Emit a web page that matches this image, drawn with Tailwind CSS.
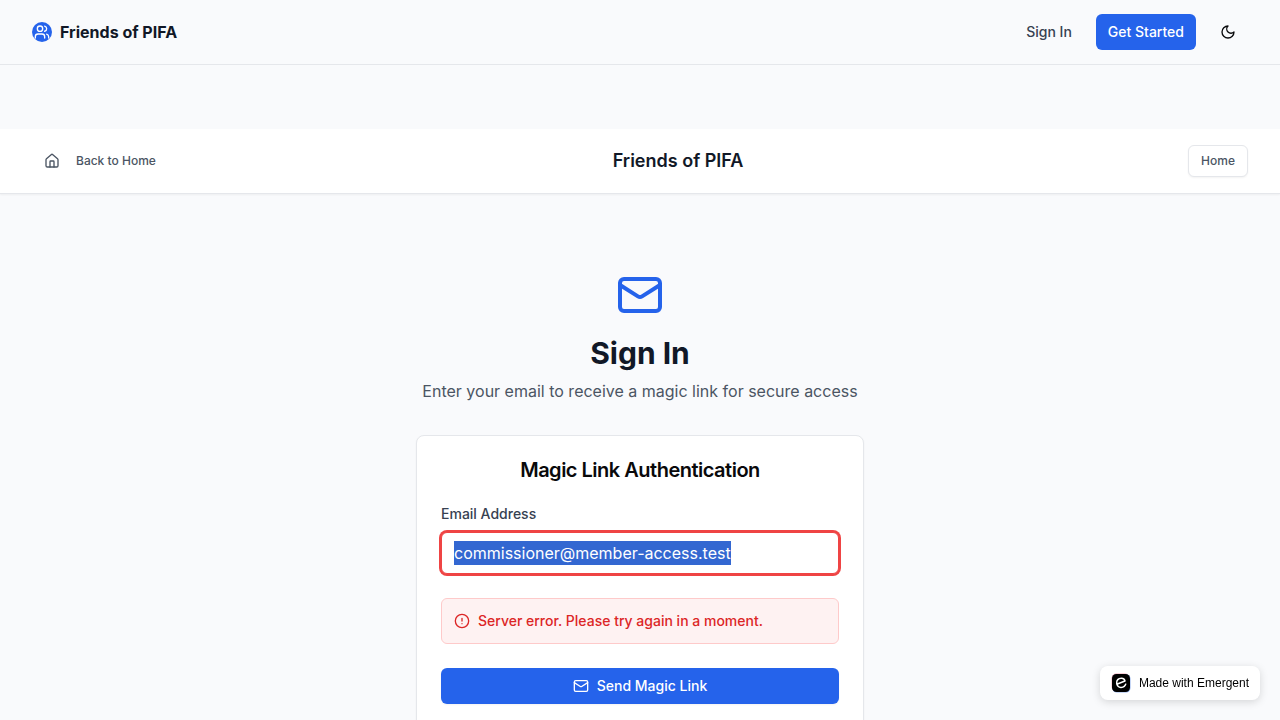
<!DOCTYPE html>
<html lang="en">
<head>
<meta charset="utf-8">
<meta name="viewport" content="width=device-width, initial-scale=1">
<title>Sign In - Friends of PIFA</title>
<script src="https://cdn.jsdelivr.net/npm/@tailwindcss/browser@4"></script>
</head>
<body class="h-screen overflow-hidden bg-[#f9fafc] font-['Inter',sans-serif] text-[#111827] antialiased">
  <header class="flex h-[65px] items-center justify-between border-b border-[#e5e7eb] px-8">
    <a href="#" class="flex items-center gap-2">
      <span class="flex size-5 items-center justify-center rounded-full bg-[#2563eb] text-white">
        <svg class="size-4" viewBox="0 0 24 24" fill="none" stroke="currentColor" stroke-width="2" stroke-linecap="round" stroke-linejoin="round" aria-hidden="true"><path d="M16 21v-2a4 4 0 0 0-4-4H6a4 4 0 0 0-4 4v2"/><circle cx="9" cy="7" r="4"/><path d="M22 21v-2a4 4 0 0 0-3-3.870"/><path d="M16 3.130a4 4 0 0 1 0 7.750"/></svg>
      </span>
      <span class="text-base font-bold">Friends of PIFA</span>
    </a>
    <nav class="flex items-center gap-3">
      <a href="#" class="px-3 text-sm font-medium text-[#374151]">Sign In</a>
      <button type="button" class="h-9 rounded-md bg-[#2563eb] px-3 text-sm font-medium text-white">Get Started</button>
      <button type="button" aria-label="Toggle theme" class="flex h-9 w-10 items-center justify-center text-[#09090b]">
        <svg class="size-4" viewBox="0 0 24 24" fill="none" stroke="currentColor" stroke-width="2" stroke-linecap="round" stroke-linejoin="round" aria-hidden="true"><path d="M12 3a6 6 0 0 0 9 9 9 9 0 1 1-9-9Z"/></svg>
      </button>
    </nav>
  </header>

  <div class="mt-16 flex h-[65px] items-center justify-between border-b border-[#e5e7eb] bg-white px-8 shadow-xs">
    <a href="#" class="flex items-center gap-4 px-3 text-xs font-medium text-[#4b5563]">
      <svg class="size-4" viewBox="0 0 24 24" fill="none" stroke="currentColor" stroke-width="2" stroke-linecap="round" stroke-linejoin="round" aria-hidden="true"><path d="M15 21v-8a1 1 0 0 0-1-1h-4a1 1 0 0 0-1 1v8"/><path d="M3 10a2 2 0 0 1 .709-1.528l7-5.999a2 2 0 0 1 2.582 0l7 5.999A2 2 0 0 1 21 10v9a2 2 0 0 1-2 2H5a2 2 0 0 1-2-2z"/></svg>
      Back to Home
    </a>
    <h2 class="text-lg font-semibold">Friends of PIFA</h2>
    <button type="button" class="h-8 rounded-md border border-[#e5e7eb] bg-white px-3 text-xs font-medium text-[#4b5563] shadow-xs">Home</button>
  </div>

  <main class="mx-auto max-w-md pt-[77px]">
    <div class="mb-8 text-center">
      <svg class="mx-auto mb-4 size-12 text-[#2563eb]" viewBox="0 0 24 24" fill="none" stroke="currentColor" stroke-width="2" stroke-linecap="round" stroke-linejoin="round" aria-hidden="true"><rect width="20" height="16" x="2" y="4" rx="2"/><path d="m22 7-8.970 5.700a1.940 1.940 0 0 1-2.060 0L2 7"/></svg>
      <h1 class="text-3xl font-bold">Sign In</h1>
      <p class="mt-2 text-base text-[#4b5563]">Enter your email to receive a magic link for secure access</p>
    </div>
    <section class="rounded-lg border border-[#e5e7eb] bg-white p-6 shadow-xs">
      <h3 class="text-center text-xl/5 font-semibold tracking-tight text-[#09090b]">Magic Link Authentication</h3>
      <form class="mt-6 flex flex-col gap-6">
        <div class="flex flex-col gap-2">
          <label for="email" class="text-sm font-medium text-[#374151]">Email Address</label>
          <input id="email" type="text" inputmode="email" value="commissioner@member-access.test" spellcheck="false" class="w-full rounded-md border border-[#ef4444] bg-white px-3 py-2 text-base text-[#111827] ring-2 ring-[#ef4444] outline-none selection:bg-[#3367d1] selection:text-white">
        </div>
        <div role="alert" class="flex items-center gap-2 rounded-md border border-[#fecaca] bg-[#fef2f2] p-3 text-sm font-medium text-[#dc2626]">
          <svg class="size-4" viewBox="0 0 24 24" fill="none" stroke="currentColor" stroke-width="2" stroke-linecap="round" stroke-linejoin="round" aria-hidden="true"><circle cx="12" cy="12" r="10"/><path d="M12 8v4M12 16h.01"/></svg>
          <p>Server error. Please try again in a moment.</p>
        </div>
        <button type="submit" class="flex h-9 items-center justify-center gap-2 rounded-md bg-[#2563eb] text-sm font-medium text-white shadow-xs">
          <svg class="size-4" viewBox="0 0 24 24" fill="none" stroke="currentColor" stroke-width="2" stroke-linecap="round" stroke-linejoin="round" aria-hidden="true"><rect width="20" height="16" x="2" y="4" rx="2"/><path d="m22 7-8.970 5.700a1.940 1.940 0 0 1-2.060 0L2 7"/></svg>
          Send Magic Link
        </button>
      </form>
    </section>
  </main>

  <a href="#" class="fixed right-5 bottom-5 flex items-center gap-2 rounded-lg bg-white px-[11px] py-[7px] font-['Liberation_Sans',sans-serif] text-xs text-black shadow-[0_2px_8px_rgba(0,0,0,0.15)]">
    <svg class="size-5" viewBox="0 0 20 20" fill="none" aria-hidden="true">
      <rect x="0.600" y="0.600" width="18" height="18" rx="4.500" fill="#f0a0b4"/>
      <rect x="1.300" y="1.300" width="18.200" height="18.200" rx="4.500" fill="#8fb0ee"/>
      <rect x="1" y="1" width="18" height="18" rx="4.500" fill="#000"/>
      <path d="M5.800 11.300 14 8C13.400 6 12 5.200 10.300 5.300 7.500 5.500 5.600 7.500 5.700 10.100 5.800 12.800 7.700 14.500 10.100 14.400 12.500 14.300 14.300 12.900 14.900 10.600" stroke="#fff" stroke-width="1.500" stroke-linejoin="round"/>
    </svg>
    Made with Emergent
  </a>
  <script>
    const email = document.getElementById('email');
    email.focus();
    email.select();
  </script>
</body>
</html>
